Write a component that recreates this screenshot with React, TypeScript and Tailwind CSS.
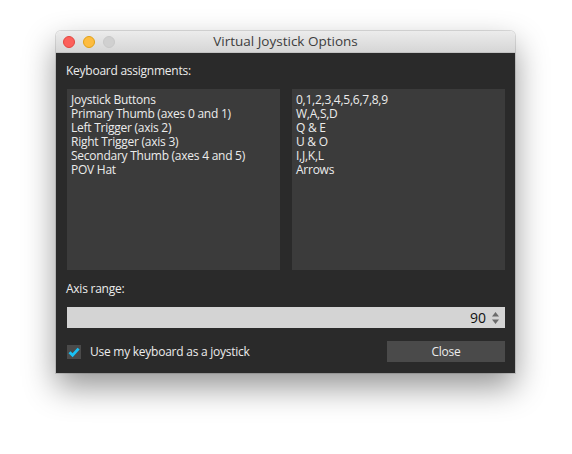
const actions = [
  "Joystick Buttons",
  "Primary Thumb (axes 0 and 1)",
  "Left Trigger (axis 2)",
  "Right Trigger (axis 3)",
  "Secondary Thumb (axes 4 and 5)",
  "POV Hat",
];

const keys = ["0,1,2,3,4,5,6,7,8,9", "W,A,S,D", "Q & E", "U & O", "I,J,K,L", "Arrows"];

function ListBox({ items }: { items: string[] }) {
  return (
    <div className="h-[181px] flex-1 bg-[#3b3b3b] px-[4px] pt-[4px]">
      {items.map((item) => (
        <div key={item} className="h-[14px] leading-[14px]">
          {item}
        </div>
      ))}
    </div>
  );
}

export default function App() {
  return (
    <div className="h-[454px] w-[572px] bg-white pl-[56px] pt-[31px] font-['Open_Sans',sans-serif]">
      <div className="w-[459px] overflow-hidden rounded-t-[5px] shadow-[0_14px_32px_rgba(0,0,0,0.42),0_0_0_1px_rgba(0,0,0,0.12)]">
        <div className="relative flex h-[22px] items-center justify-center border-b border-[#c2c2c2] bg-gradient-to-b from-[#ececec] to-[#d6d6d6]">
          <div className="absolute left-[7px] top-[5px] flex gap-[8px]">
            <span className="h-[12px] w-[12px] rounded-full border border-[#e2463f] bg-[#fc605b]" />
            <span className="h-[12px] w-[12px] rounded-full border border-[#e1a116] bg-[#fdbc40]" />
            <span className="h-[12px] w-[12px] rounded-full border border-[#c8c8c8] bg-[#d0d0d0]" />
          </div>
          <span className="text-[13.5px] text-[#3d3d3d]">Virtual Joystick Options</span>
        </div>

        <div className="flex h-[320px] flex-col bg-[#2a2a2a] pl-[11px] pr-[10px] pt-[11px] text-[12px] tracking-[-0.25px] text-[#ececec]">
          <div className="-ml-[1px] h-[14px] leading-[14px]">Keyboard assignments:</div>
          <div className="mt-[11px] flex gap-[12px]">
            <ListBox items={actions} />
            <ListBox items={keys} />
          </div>
          <div className="-ml-[1px] mt-[12px] h-[14px] leading-[14px]">Axis range:</div>
          <div className="mt-[11px] flex h-[21px] items-center justify-end bg-[#d4d4d4] pr-[5px] text-[14px] tracking-normal text-[#111]">
            <span>90</span>
            <svg width="9" height="14" viewBox="0 0 9 14" className="ml-[5px]">
              <path d="M4.5 1 L8 5.5 H1 Z" fill="#6b6b6b" />
              <path d="M4.5 13 L8 8.5 H1 Z" fill="#6b6b6b" />
            </svg>
          </div>
          <div className="mt-[13px] flex h-[21px] items-center">
            <span className="flex h-[14px] w-[14px] items-center justify-center bg-[#4a4a4a]">
              <svg width="12" height="12" viewBox="0 0 12 12">
                <path
                  d="M1.5 6.2 L4.6 9.3 L10.6 2.6"
                  fill="none"
                  stroke="#19c2f6"
                  strokeWidth="2.8"
                  strokeLinejoin="miter"
                />
              </svg>
            </span>
            <span className="ml-[9px]">Use my keyboard as a joystick</span>
            <button className="ml-auto h-[21px] w-[118px] bg-[#4a4a4a] text-[12px] text-[#ececec]">
              Close
            </button>
          </div>
        </div>
      </div>
    </div>
  );
}
